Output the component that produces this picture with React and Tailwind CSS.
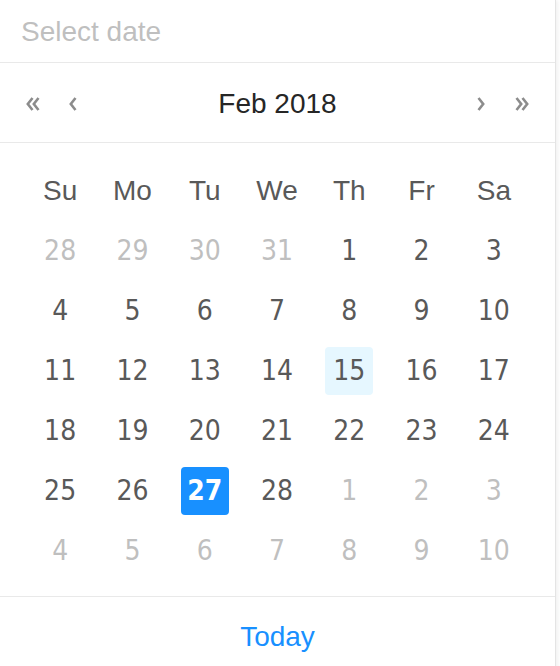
import React from 'react'

const weekDays = ['Su', 'Mo', 'Tu', 'We', 'Th', 'Fr', 'Sa']

// Feb 2018 grid, starts on Sun Jan 28
const buildDays = () => {
  const days = []
  ;[28, 29, 30, 31].forEach(d => days.push({ d, other: true }))
  for (let d = 1; d <= 28; d++) days.push({ d, other: false })
  for (let d = 1; d <= 10; d++) days.push({ d, other: true })
  return days
}

const Chevron = ({ dir = 'left', double = false }) => {
  const w = double ? 14 : 8
  const flip = dir === 'right' ? `scale(-1,1) translate(-${w},0)` : undefined
  return (
    <svg width={w} height="16" viewBox={`0 0 ${w} 16`} className="block">
      <g transform={flip} fill="none" stroke="#8c8c8c" strokeWidth="2.6" strokeLinejoin="miter">
        <polyline points="6.5,2 1.8,8 6.5,14" />
        {double && <polyline points="12.5,2 7.8,8 12.5,14" />}
      </g>
    </svg>
  )
}

export default function App() {
  const days = buildDays()

  return (
    <div className="w-[556px] bg-white border-r border-[#e4e4e4] shadow-[2px_0_4px_rgba(0,0,0,0.06)] font-['Liberation_Sans',Arial,sans-serif]">
      <div className="h-[63px] px-[21px] pt-[2px] flex items-center border-b border-[#e9e9e9]">
        <span className="text-[28px] text-[#bfbfbf] leading-none">Select date</span>
      </div>

      <div className="h-[80px] pt-[3px] grid grid-cols-[1fr_auto_1fr] items-center border-b border-[#e9e9e9]">
        <div className="flex items-center pl-[26px] gap-[29px]">
          <Chevron double />
          <Chevron />
        </div>
        <div className="text-[28px] font-medium text-[#262626] leading-none">Feb 2018</div>
        <div className="flex items-center justify-end pr-[26px] gap-[30px]">
          <Chevron dir="right" />
          <Chevron dir="right" double />
        </div>
      </div>

      <div className="pl-[24px] pr-[25px] pt-[18px] pb-[15px] border-b border-[#e9e9e9]">
        <div className="grid grid-cols-7">
          {weekDays.map(w => (
            <div key={w} className="h-[60px] flex items-center justify-center text-[28px] text-[#595959] leading-none">
              {w}
            </div>
          ))}
          {days.map((day, i) => {
            const selected = !day.other && day.d === 27
            const hover = !day.other && day.d === 15
            return (
              <div key={i} className="h-[60px] flex items-center justify-center">
                <div
                  className={`w-[48px] h-[48px] rounded-[4px] flex items-center justify-center text-[28px] leading-none font-['DejaVu_Sans_Condensed','DejaVu_Sans',sans-serif] [font-stretch:condensed] ${
                    selected
                      ? 'bg-[#1890ff] text-white font-bold'
                      : hover
                      ? 'bg-[#e6f7ff] text-[#595959]'
                      : day.other
                      ? 'text-[#bfbfbf]'
                      : 'text-[#595959]'
                  }`}
                >
                  {day.d}
                </div>
              </div>
            )
          })}
        </div>
      </div>

      <div className="h-[78px] pt-[2px] flex items-center justify-center">
        <span className="text-[28px] text-[#1890ff] leading-none">Today</span>
      </div>
    </div>
  )
}
